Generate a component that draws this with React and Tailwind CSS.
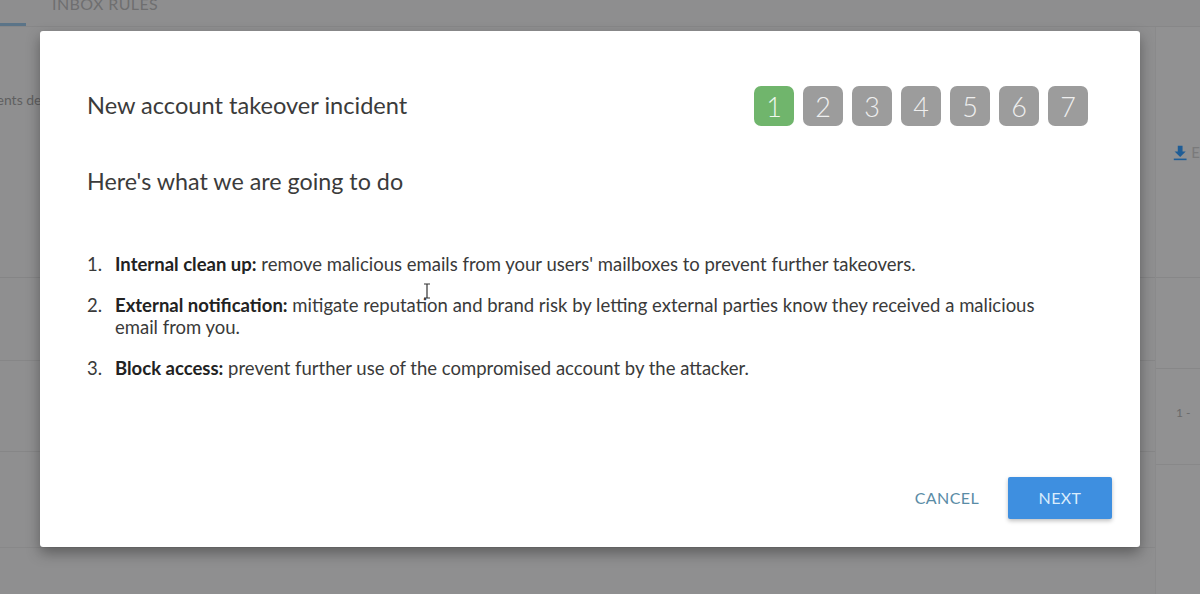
import React from "react";

function Step({ n, active }) {
  return (
    <div
      className={`w-[40px] h-[40px] rounded-[7px] flex items-center justify-center text-[27px] font-light leading-none ${
        active ? "bg-[#70b56c] text-[#eef8ec]" : "bg-[#9c9c9c] text-[#efefef]"
      }`}
    >
      {n}
    </div>
  );
}

export default function App() {
  const font = { fontFamily: "Lato, 'Open Sans', sans-serif" };
  return (
    <div className="relative w-[1200px] h-[594px] overflow-hidden bg-[#8f8f90]" style={font}>
      {/* background page (dimmed) */}
      <div className="flex flex-col h-full">
        <div className="h-[27px] flex items-end border-b border-[#878788] bg-[#8e8e8f]">
          <div className="w-[26px] h-[3px] bg-[#5b7488]" />
          <div className="ml-[26px] self-start -mt-[8px] text-[16px] text-[#6f6f70] tracking-wide">INBOX RULES</div>
        </div>
        <div className="flex flex-1">
          <div className="flex-1 flex flex-col">
            <div className="h-[251px] border-b border-[#858586] pt-[62px]">
              <div className="text-[14px] text-[#5f5f60] -ml-[33px]">Incidents det</div>
            </div>
            <div className="h-[83px] border-b border-[#868687]" />
            <div className="h-[91px] border-b border-[#868687]" />
            <div className="h-[96px] border-b border-[#888889]" />
          </div>
          <div className="w-[45px] flex flex-col bg-[#919192] border-l border-[#8a8a8b]">
            <div className="h-[124px] pt-[115px] pl-[17px] flex items-start gap-[4px]">
              <svg width="18" height="22" viewBox="0 0 18 22">
                <path d="M6 2h6v7h4l-7 7-7-7h4z" fill="#1f5d96" />
                <rect x="1" y="18" width="16" height="2" fill="#1f5d96" />
              </svg>
              <span className="text-[15px] text-[#7a7a7b] leading-[20px]">E</span>
            </div>
            <div className="h-[127px] border-b border-[#878788]" />
            <div className="h-[91px] border-b border-[#878788]" />
            <div className="h-[96px] border-b border-[#888889] pt-[35px] pl-[20px] text-[12px] text-[#6a6a6b]">1 -</div>
          </div>
        </div>
      </div>

      {/* modal */}
      <div className="absolute left-[40px] top-[31px] w-[1100px] h-[516px] bg-white rounded-[3px] shadow-[0_6px_14px_rgba(0,0,0,0.35)] flex flex-col pl-[47px] pr-[52px] pt-[55px]">
        <div className="flex items-center justify-between h-[40px]">
          <h1 className="text-[23.6px] text-[#3b3b3b] leading-none">New account takeover incident</h1>
          <div className="flex gap-[9px]">
            {[1, 2, 3, 4, 5, 6, 7].map((n) => (
              <Step key={n} n={n} active={n === 1} />
            ))}
          </div>
        </div>
        <h2 className="mt-[40px] text-[23.3px] leading-[30px] text-[#3b3b3b]">Here's what we are going to do</h2>
        <ol className="mt-[57px] pr-[22px] text-[18.5px] leading-[22px] text-[#3a3a3a] flex flex-col gap-[19px]">
          <li className="flex">
            <span className="w-[28px] shrink-0">1.</span>
            <span>
              <b className="font-bold text-[#222]">Internal clean up:</b> remove malicious emails from your users' mailboxes to prevent further takeovers.
            </span>
          </li>
          <li className="flex">
            <span className="w-[28px] shrink-0">2.</span>
            <span>
              <b className="font-bold text-[#222]">External notification:</b> mitigate reputation and brand risk by letting external parties know they received a malicious email from you.
            </span>
          </li>
          <li className="flex">
            <span className="w-[28px] shrink-0">3.</span>
            <span>
              <b className="font-bold text-[#222]">Block access:</b> prevent further use of the compromised account by the attacker.
            </span>
          </li>
        </ol>
        <div className="mt-auto mb-[28px] -mr-[24px] flex justify-end items-center gap-[29px]">
          <button className="text-[16px] text-[#5a8ca6] tracking-wide px-[0px]">CANCEL</button>
          <button className="w-[104px] h-[42px] rounded-[2px] bg-[#3e8fe0] text-[16px] text-[#d9ecfc] tracking-wide shadow-[0_2px_4px_rgba(0,0,0,0.25)]">
            NEXT
          </button>
        </div>
      </div>

      {/* text cursor */}
      <svg className="absolute left-[423px] top-[283px]" width="8" height="16" viewBox="0 0 8 16">
        <path d="M1 1h6M4 1v14M1 15h6" stroke="#333" strokeWidth="1.2" fill="none" />
      </svg>
    </div>
  );
}
